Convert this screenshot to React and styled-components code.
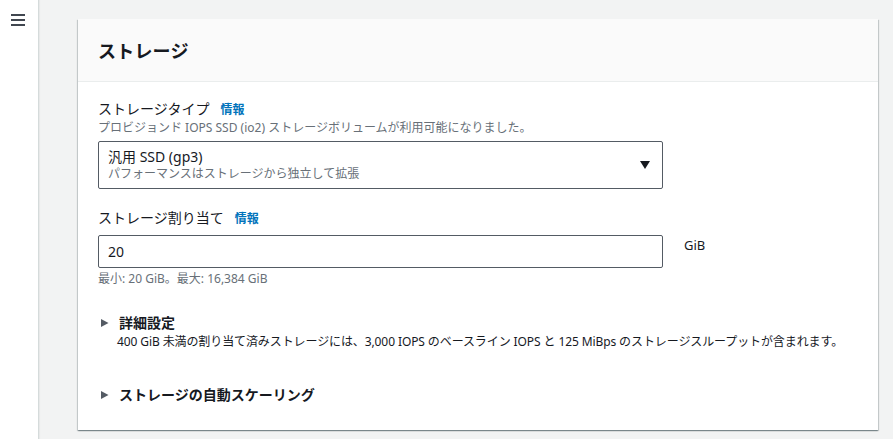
import React from "react";
import styled, { createGlobalStyle } from "styled-components";

const Global = createGlobalStyle`
  html, body { margin: 0; padding: 0; }
  body {
    background: #f2f3f3;
    font-family: "Noto Sans", "Noto Sans CJK JP", sans-serif;
    color: #16191f;
    overflow: hidden;
  }
`;

const Page = styled.div`
  display: flex;
  height: 439px;
  width: 893px;
`;

const Sidebar = styled.aside`
  width: 39px;
  flex: none;
  background: #ffffff;
  border-right: 1px solid #d5dbdb;
  box-shadow: 1px 0 1px rgba(0,0,0,0.04);
  display: flex;
  justify-content: center;
  align-items: flex-start;
  padding-top: 14px;
  box-sizing: border-box;
`;

const MenuButton = styled.div`
  width: 14px;
  height: 12px;
  display: flex;
  flex-direction: column;
  justify-content: space-between;
  margin-left: -2px;
`;

const MenuLine = styled.div`
  flex: none;
  height: 2px;
  width: 14px;
  background: #414750;
`;

const Main = styled.main`
  flex: 1;
  padding: 19px 15px 0 39px;
  box-sizing: border-box;
`;

const Card = styled.section`
  background: #ffffff;
  box-shadow: 0 1px 1px 0 rgba(0, 28, 36, 0.3), 1px 1px 1px 0 rgba(0, 28, 36, 0.15), -1px 1px 1px 0 rgba(0, 28, 36, 0.15);
  height: 411px;
  display: flex;
  flex-direction: column;
`;

const CardHeader = styled.header`
  background: #fafafa;
  border-bottom: 1px solid #eaeded;
  height: 63px;
  box-sizing: border-box;
  display: flex;
  align-items: center;
  padding: 0 20px;
`;

const Title = styled.h2`
  margin: 0;
  font-size: 18px;
  font-weight: 700;
  color: #16191f;
  letter-spacing: 0.2px;
`;

const CardBody = styled.div`
  padding: 17px 20px 0 20px;
  display: flex;
  flex-direction: column;
`;

const Field = styled.div`
  display: flex;
  flex-direction: column;
  margin-bottom: ${(p) => p.$mb || 0}px;
`;

const LabelRow = styled.div`
  display: flex;
  align-items: baseline;
  gap: 11px;
  line-height: 20px;
`;

const Label = styled.label`
  font-size: 14px;
  color: #16191f;
`;

const InfoLink = styled.a`
  font-size: 12px;
  font-weight: 700;
  color: #0073bb;
  text-decoration: none;
`;

const Description = styled.div`
  font-size: 12px;
  color: #687078;
  line-height: 16px;
  margin-top: ${(p) => p.$mt || 0}px;
`;

const Control = styled.div`
  display: flex;
  align-items: flex-start;
  margin-top: ${(p) => p.$mt || 0}px;
`;

const SelectBox = styled.div`
  width: 565px;
  height: 48px;
  box-sizing: border-box;
  border: 1px solid #545b64;
  border-radius: 2px;
  display: flex;
  align-items: center;
  justify-content: space-between;
  padding: 0 11px 0 9px;
`;

const SelectText = styled.div`
  display: flex;
  flex-direction: column;
`;

const SelectMain = styled.span`
  font-size: 14px;
  line-height: 18px;
  color: #16191f;
`;

const SelectSub = styled.span`
  font-size: 12px;
  line-height: 16px;
  color: #687078;
`;

const Caret = styled.svg`
  width: 12px;
  height: 10px;
  flex: none;
`;

const InputBox = styled.input`
  width: 565px;
  height: 33px;
  box-sizing: border-box;
  border: 1px solid #545b64;
  border-radius: 2px;
  padding: 0 9px;
  font-family: inherit;
  font-size: 14px;
  color: #16191f;
  outline: none;
`;

const Unit = styled.span`
  font-size: 13px;
  color: #16191f;
  margin-left: 21px;
  margin-top: 1px;
`;

const Expander = styled.div`
  display: flex;
  flex-direction: column;
  margin-top: ${(p) => p.$mt || 0}px;
`;

const ExpanderHead = styled.div`
  display: flex;
  align-items: center;
  gap: 8px;
  line-height: 20px;
`;

const ExpanderTitle = styled.span`
  font-size: 14px;
  font-weight: 700;
  color: #16191f;
`;

const ExpanderDesc = styled.div`
  font-size: 12px;
  letter-spacing: -0.1px;
  color: #16191f;
  line-height: 16px;
  padding-left: 19px;
  margin-top: 1px;
`;

const Arrow = () => (
  <svg width="11" height="10" viewBox="0 0 11 10" style={{ marginLeft: 2, flex: "none" }}>
    <path d="M1 1 L8.5 5 L1 9 Z" fill="#545b64" />
  </svg>
);

export default function App() {
  return (
    <>
      <Global />
      <Page>
        <Sidebar>
          <MenuButton aria-label="menu">
            <MenuLine />
            <MenuLine />
            <MenuLine />
          </MenuButton>
        </Sidebar>
        <Main>
          <Card>
            <CardHeader>
              <Title>ストレージ</Title>
            </CardHeader>
            <CardBody>
              <Field $mb={19}>
                <LabelRow>
                  <Label>ストレージタイプ</Label>
                  <InfoLink href="#">情報</InfoLink>
                </LabelRow>
                <Description>プロビジョンド IOPS SSD (io2) ストレージボリュームが利用可能になりました。</Description>
                <Control $mt={5}>
                  <SelectBox>
                    <SelectText>
                      <SelectMain>汎用 SSD (gp3)</SelectMain>
                      <SelectSub>パフォーマンスはストレージから独立して拡張</SelectSub>
                    </SelectText>
                    <Caret viewBox="0 0 12 10">
                      <path d="M1 1 H11 L6 9 Z" fill="#16191f" />
                    </Caret>
                  </SelectBox>
                </Control>
              </Field>
              <Field>
                <LabelRow>
                  <Label>ストレージ割り当て</Label>
                  <InfoLink href="#">情報</InfoLink>
                </LabelRow>
                <Control $mt={6}>
                  <InputBox defaultValue="20" />
                  <Unit>GiB</Unit>
                </Control>
                <Description $mt={3}>最小: 20 GiB。最大: 16,384 GiB</Description>
              </Field>
              <Expander $mt={26}>
                <ExpanderHead>
                  <Arrow />
                  <ExpanderTitle>詳細設定</ExpanderTitle>
                </ExpanderHead>
                <ExpanderDesc>400 GiB 未満の割り当て済みストレージには、3,000 IOPS のベースライン IOPS と 125 MiBps のストレージスループットが含まれます。</ExpanderDesc>
              </Expander>
              <Expander $mt={35}>
                <ExpanderHead>
                  <Arrow />
                  <ExpanderTitle>ストレージの自動スケーリング</ExpanderTitle>
                </ExpanderHead>
              </Expander>
            </CardBody>
          </Card>
        </Main>
      </Page>
    </>
  );
}
